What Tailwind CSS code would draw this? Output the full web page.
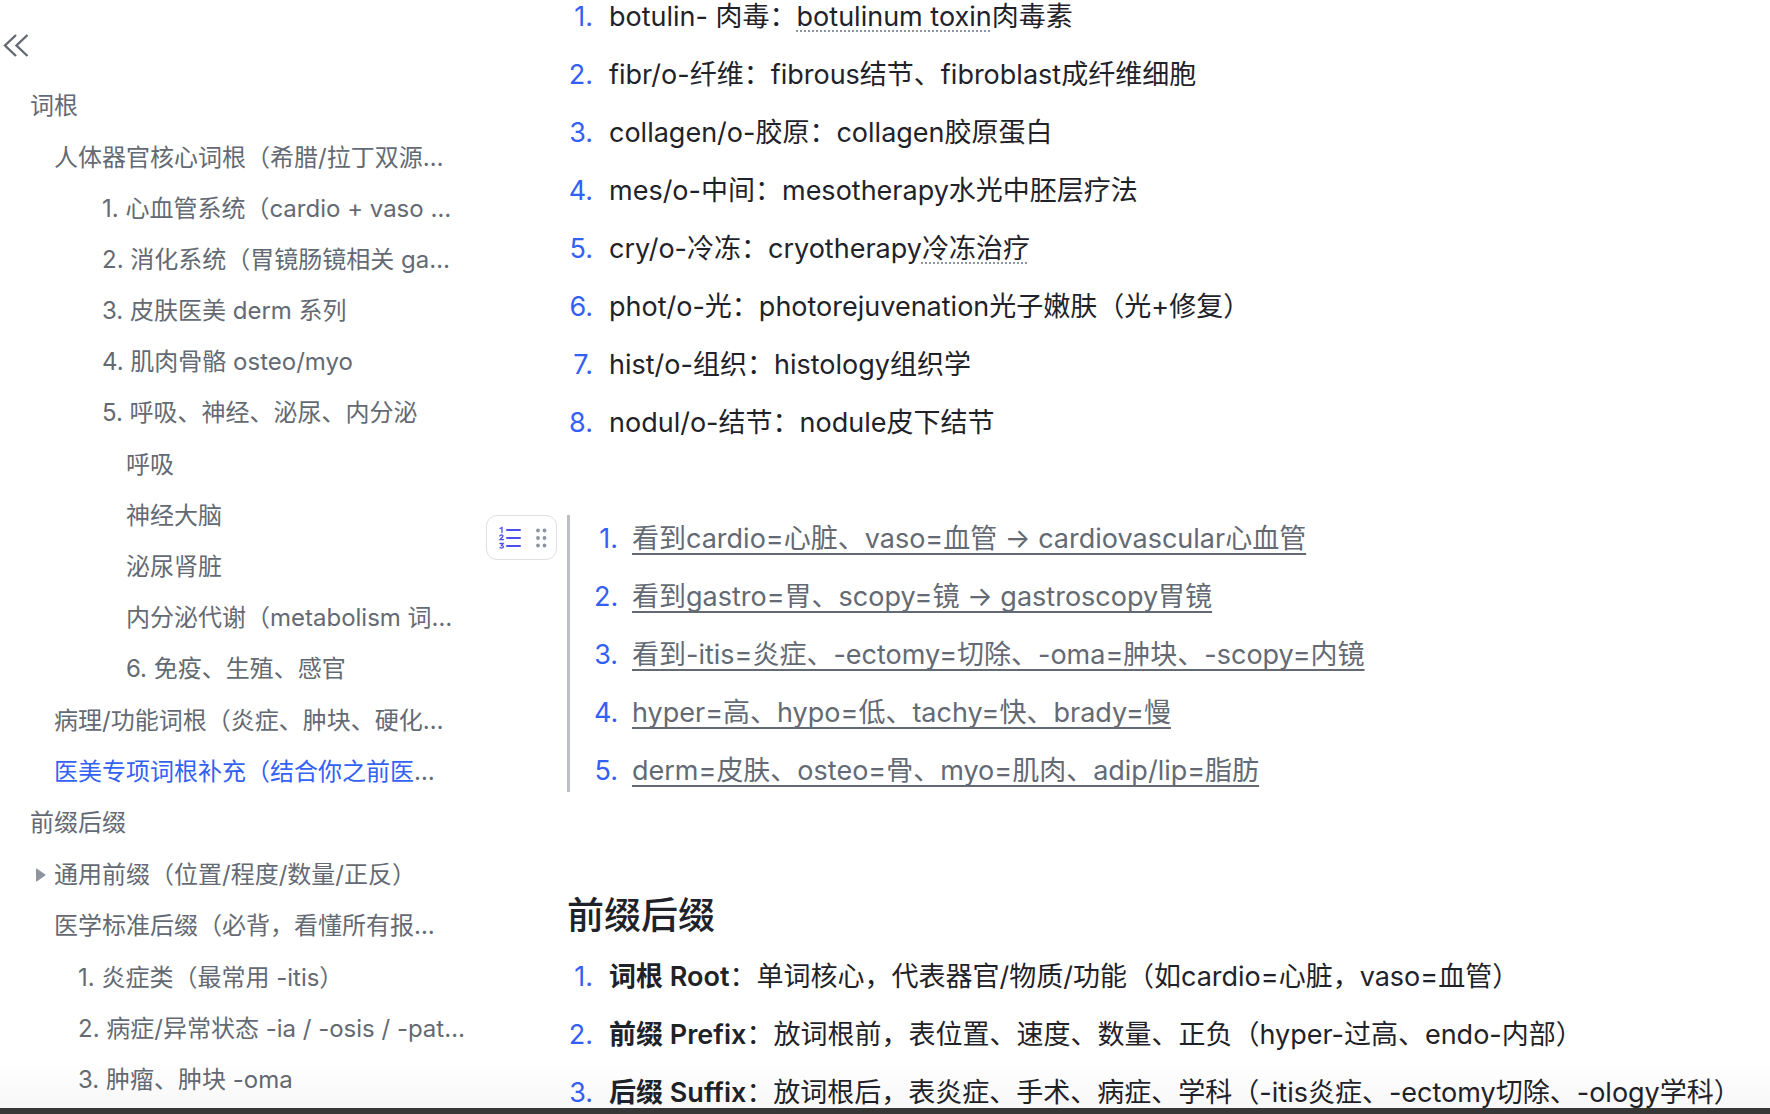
<!DOCTYPE html>
<html lang="zh-CN">
<head>
<meta charset="utf-8">
<title>医学词根词缀</title>
<script src="https://cdn.jsdelivr.net/npm/@tailwindcss/browser@4"></script>
</head>
<body class="flex h-screen flex-col overflow-hidden bg-white font-['Inter','Noto_Sans_CJK_SC',sans-serif] text-[#1f2329]">
<div class="relative flex min-h-0 flex-1 overflow-hidden">
  <aside class="w-[486px] shrink-0 pt-[30px] text-2xl text-[#646a73]">
    <button type="button" aria-label="收起目录" class="block h-[30px] w-8">
      <svg class="h-[30px] w-8" viewBox="0 0 32 30" fill="none" stroke="#646a73" stroke-width="2.4"><path d="M16 5 5 15.500 16 26M27.500 5 16.500 15.500 27.500 26"/></svg>
    </button>
    <nav class="mt-5 whitespace-nowrap leading-[51px]" aria-label="目录">
      <ul class="pl-[30px]">
        <li><a href="#root">词根</a>
          <ul class="pt-px pl-6">
            <li><a href="#organ">人体器官核心词根（希腊/拉丁双源…</a>
              <ul class="pl-12">
                <li><a href="#cardio">1. 心血管系统（cardio + vaso …</a></li>
                <li><a href="#gastro">2. 消化系统（胃镜肠镜相关 ga…</a></li>
                <li><a href="#derm">3. 皮肤医美 derm 系列</a></li>
                <li><a href="#osteo">4. 肌肉骨骼 osteo/myo</a></li>
                <li><a href="#systems">5. 呼吸、神经、泌尿、内分泌</a>
                  <ul class="py-px pl-6">
                    <li><a href="#breath">呼吸</a></li>
                    <li><a href="#neuro">神经大脑</a></li>
                    <li><a href="#renal">泌尿肾脏</a></li>
                    <li><a href="#metabolism">内分泌代谢（metabolism 词…</a></li>
                    <li><a href="#immune">6. 免疫、生殖、感官</a></li>
                  </ul>
                </li>
              </ul>
            </li>
            <li><a href="#pathology">病理/功能词根（炎症、肿块、硬化…</a></li>
            <li><a href="#aesthetic"><span class="text-[#3361f5]">医美专项词根补充（结合你之前医</span>…</a></li>
          </ul>
        </li>
        <li><a href="#affix">前缀后缀</a>
          <ul class="pt-px pl-6">
            <li class="relative">
              <svg class="absolute top-[19px] -left-[18px] h-[14px] w-[10px]" viewBox="0 0 10 14" fill="#8f959e"><path d="M0 1v12q0 1 1 .3L9 7.800q.8-.8 0-1.600L1 .7Q0 0 0 1Z"/></svg>
              <a href="#prefix">通用前缀（位置/程度/数量/正反）</a>
            </li>
            <li><a href="#suffix">医学标准后缀（必背，看懂所有报…</a>
              <ul class="pt-px pl-6">
                <li><a href="#itis">1. 炎症类（最常用 -itis）</a></li>
                <li><a href="#osis">2. 病症/异常状态 -ia / -osis / -pat…</a></li>
                <li><a href="#oma">3. 肿瘤、肿块 -oma</a></li>
              </ul>
            </li>
          </ul>
        </li>
      </ul>
    </nav>
  </aside>

  <main class="min-w-0 flex-1 whitespace-nowrap text-[27px] leading-[42px]">
    <ol class="-mt-1 flex flex-col gap-4 pl-[82px]">
      <li class="flex gap-4"><span class="w-[25px] text-right text-[#3361f5]">1.</span><p>botulin- 肉毒：<span class="underline decoration-[#8f959e] decoration-dotted decoration-2 underline-offset-4 [text-decoration-skip-ink:none]">botulinum toxin</span>肉毒素</p></li>
      <li class="flex gap-4"><span class="w-[25px] text-right text-[#3361f5]">2.</span><p>fibr/o-纤维：fibrous结节、fibroblast成纤维细胞</p></li>
      <li class="flex gap-4"><span class="w-[25px] text-right text-[#3361f5]">3.</span><p>collagen/o-胶原：collagen胶原蛋白</p></li>
      <li class="flex gap-4"><span class="w-[25px] text-right text-[#3361f5]">4.</span><p>mes/o-中间：mesotherapy水光中胚层疗法</p></li>
      <li class="flex gap-4"><span class="w-[25px] text-right text-[#3361f5]">5.</span><p>cry/o-冷冻：cryotherapy<span class="underline decoration-[#8f959e] decoration-dotted decoration-2 underline-offset-4 [text-decoration-skip-ink:none]">冷冻治疗</span></p></li>
      <li class="flex gap-4"><span class="w-[25px] text-right text-[#3361f5]">6.</span><p>phot/o-光：photorejuvenation光子嫩肤（光+修复）</p></li>
      <li class="flex gap-4"><span class="w-[25px] text-right text-[#3361f5]">7.</span><p>hist/o-组织：histology组织学</p></li>
      <li class="flex gap-4"><span class="w-[25px] text-right text-[#3361f5]">8.</span><p>nodul/o-结节：nodule皮下结节</p></li>
    </ol>

    <div class="mt-[71px] flex items-start">
      <button type="button" aria-label="有序列表" class="flex h-[45px] w-[71px] shrink-0 items-center rounded-[11px] border border-[#dee0e3] bg-white">
        <svg class="h-[43px] w-[69px]" viewBox="0 0 69 43">
          <g stroke="#4b4ef0" stroke-width="2" fill="none" stroke-linecap="round"><path d="M20 14h13M20 22h13M20 30h13"/><path stroke-width="1.300" d="M13 12.500l2-1v5M12.800 20q.4-1.200 1.700-1.200 2.400.5 1 2.200l-2.500 2.700h3.500M13 27.500h3.200l-1.600 2q2 0 1.800 1.600-.6 1.600-3.400.6"/></g>
          <g fill="#8f959e"><circle cx="51" cy="14.500" r="1.900"/><circle cx="57.500" cy="14.500" r="1.900"/><circle cx="51" cy="22" r="1.900"/><circle cx="57.500" cy="22" r="1.900"/><circle cx="51" cy="29.500" r="1.900"/><circle cx="57.500" cy="29.500" r="1.900"/></g>
        </svg>
      </button>
      <blockquote class="ml-[10px] border-l-3 border-[#bbbfc4] pt-[3px] pl-6 text-[#646a73]">
        <ol class="flex flex-col gap-4">
          <li class="flex gap-[14px]"><span class="w-6 text-right text-[#3361f5]">1.</span><u class="decoration-2 underline-offset-5 [text-decoration-skip-ink:none]">看到cardio=心脏、vaso=血管 → cardiovascular心血管</u></li>
          <li class="flex gap-[14px]"><span class="w-6 text-right text-[#3361f5]">2.</span><u class="decoration-2 underline-offset-5 [text-decoration-skip-ink:none]">看到gastro=胃、scopy=镜 → gastroscopy胃镜</u></li>
          <li class="flex gap-[14px]"><span class="w-6 text-right text-[#3361f5]">3.</span><u class="decoration-2 underline-offset-5 [text-decoration-skip-ink:none]">看到-itis=炎症、-ectomy=切除、-oma=肿块、-scopy=内镜</u></li>
          <li class="flex gap-[14px]"><span class="w-6 text-right text-[#3361f5]">4.</span><u class="decoration-2 underline-offset-5 [text-decoration-skip-ink:none]">hyper=高、hypo=低、tachy=快、brady=慢</u></li>
          <li class="flex gap-[14px]"><span class="w-6 text-right text-[#3361f5]">5.</span><u class="decoration-2 underline-offset-5 [text-decoration-skip-ink:none]">derm=皮肤、osteo=骨、myo=肌肉、adip/lip=脂肪</u></li>
        </ol>
      </blockquote>
    </div>

    <h1 id="affix" class="mt-[98px] pl-[81px] text-[37px] leading-[52px] font-medium">前缀后缀</h1>
    <ol class="mt-[14px] flex flex-col gap-4 pl-[82px]">
      <li class="flex gap-4"><span class="w-[25px] text-right text-[#3361f5]">1.</span><p><strong class="font-semibold">词根 Root</strong>：单词核心，代表器官/物质/功能（如cardio=心脏，vaso=血管）</p></li>
      <li class="flex gap-4"><span class="w-[25px] text-right text-[#3361f5]">2.</span><p><strong class="font-semibold">前缀 Prefix</strong>：放词根前，表位置、速度、数量、正负（hyper-过高、endo-内部）</p></li>
      <li class="flex gap-4"><span class="w-[25px] text-right text-[#3361f5]">3.</span><p><strong class="font-semibold">后缀 Suffix</strong>：放词根后，表炎症、手术、病症、学科（-itis炎症、-ectomy切除、-ology学科）</p></li>
    </ol>
  </main>
  <div class="pointer-events-none absolute inset-x-0 bottom-0 h-12 bg-linear-to-b from-black/0 to-black/3"></div>
</div>
<footer class="h-[6px] shrink-0 bg-[#373737]"></footer>
</body>
</html>
